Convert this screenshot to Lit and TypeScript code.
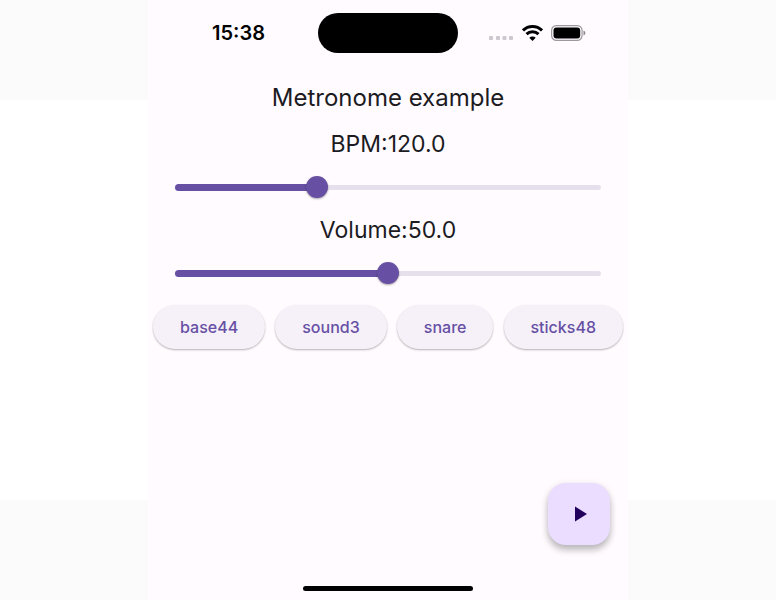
import { LitElement, html, css } from "lit";
import { customElement, property, state } from "lit/decorators.js";

/** Labelled slider with a thick active track and a thin inactive one. */
@customElement("value-slider")
class ValueSlider extends LitElement {
  @property() label = "";
  @property({ type: Number }) min = 0;
  @property({ type: Number }) max = 100;
  @property({ type: Number }) value = 0;

  static styles = css`
    :host {
      display: block;
    }
    .label {
      display: block;
      text-align: center;
      font-size: 23px;
      line-height: 30px;
      font-weight: 400;
    }
    .slider {
      display: grid;
      align-items: center;
      height: 56px;
      padding: 0 16px;
    }
    .slider > * {
      grid-area: 1 / 1;
    }
    .rail {
      margin: 0 11px;
      height: 5px;
      border-radius: 3px;
      background: #e6e0ec;
    }
    .active {
      margin: 0 11px;
    }
    .fill {
      height: 7px;
      border-radius: 4px;
      background: #6750a4;
    }
    input {
      appearance: none;
      width: 100%;
      height: 22px;
      margin: 0;
      background: transparent;
      cursor: pointer;
    }
    input::-webkit-slider-thumb {
      appearance: none;
      width: 22px;
      height: 22px;
      border-radius: 50%;
      background: #6750a4;
      box-shadow: 0 1px 2px rgba(0, 0, 0, 0.35);
    }
  `;

  private onInput(e: Event) {
    this.value = Number((e.target as HTMLInputElement).value);
  }

  render() {
    const share = ((this.value - this.min) / (this.max - this.min)) * 100;
    return html`
      <label class="label" for="range">${this.label}:${this.value.toFixed(1)}</label>
      <div class="slider">
        <div class="rail"></div>
        <div class="active"><div class="fill" style="width:${share}%"></div></div>
        <input id="range" type="range" min=${this.min} max=${this.max}
          .value=${String(this.value)} @input=${this.onInput} />
      </div>
    `;
  }
}

@customElement("status-bar")
class StatusBar extends LitElement {
  static styles = css`
    :host {
      display: grid;
      grid-template-columns: 1fr 140px 1fr;
      align-items: center;
      padding-top: 13px;
      color: #000;
    }
    .time {
      padding-left: 11px;
      text-align: center;
      font-size: 20px;
      line-height: 24px;
      font-weight: 600;
    }
    .island {
      height: 40px;
      border-radius: 20px;
      background: #000;
    }
    .icons {
      display: flex;
      align-items: center;
      justify-content: flex-end;
      gap: 8px;
      padding-right: 42px;
    }
    svg {
      display: block;
    }
  `;

  render() {
    return html`
      <div class="time">15:38</div>
      <div class="island"></div>
      <div class="icons">
        <svg width="25" height="16" viewBox="0 0 25 16" fill="#cdc8cf" aria-hidden="true">
          <rect x="0" y="11" width="4" height="4" rx="1" />
          <rect x="7" y="11" width="4" height="4" rx="1" />
          <rect x="13.500" y="11" width="4" height="4" rx="1" />
          <rect x="20" y="11" width="4" height="4" rx="1" />
        </svg>
        <svg width="21" height="16" viewBox="0 0 21 16" fill="none" stroke="#000" aria-hidden="true">
          <path d="M1 5.400a13.600 13.600 0 0 1 19 0" stroke-width="3" />
          <path d="M4.500 9.100a8.600 8.600 0 0 1 12 0" stroke-width="3" />
          <path d="M10.500 16 7.300 12.700a4.600 4.600 0 0 1 6.400 0z" fill="#000" stroke="none" />
        </svg>
        <svg width="35" height="16" viewBox="0 0 35 16" aria-hidden="true">
          <rect x="0.600" y="0.600" width="30.500" height="14.800" rx="4.800" fill="none" stroke="#9c999e" stroke-width="1.200" />
          <rect x="2.500" y="2.500" width="26.700" height="11" rx="3" fill="#000" />
          <path d="M32.500 5.600c2.500 1 2.500 4 0 5z" fill="#8c898e" />
        </svg>
      </div>
    `;
  }
}

@customElement("app-root")
class AppRoot extends LitElement {
  @state() private sounds = ["base44", "sound3", "snare", "sticks48"];

  static styles = css`
    :host {
      display: flex;
      justify-content: center;
      min-height: 100vh;
      background: linear-gradient(#fbfbfb 0 16.67%, #fff 16.67% 83.33%, #fbfbfb 83.33%);
      font-family: Inter, "Liberation Sans", sans-serif;
      color: #1c1b1f;
    }
    .screen {
      box-sizing: border-box;
      display: flex;
      flex-direction: column;
      width: 100%;
      max-width: 480px;
      background: #fffbff;
    }
    h1 {
      margin: 29px 0 15px;
      text-align: center;
      font-size: 24px;
      line-height: 32px;
      font-weight: 400;
    }
    .sounds {
      display: flex;
      flex-wrap: wrap;
      justify-content: space-between;
      gap: 8px;
      padding: 4px 5px;
    }
    button {
      border: none;
      font-family: inherit;
      cursor: pointer;
    }
    .sound {
      height: 44px;
      padding: 0 27px;
      border-radius: 22px;
      background: #f6f1f9;
      color: #6750a4;
      font-size: 16px;
      line-height: 20px;
      font-weight: 500;
      box-shadow: 0 1px 2px rgba(0, 0, 0, 0.3);
    }
    .bottom {
      display: flex;
      flex-direction: column;
      margin-top: auto;
    }
    .play {
      display: grid;
      place-items: center;
      align-self: flex-end;
      width: 62px;
      height: 62px;
      margin-right: 18px;
      padding: 0;
      border-radius: 18px;
      background: #eaddff;
      box-shadow: 0 5px 7px rgba(0, 0, 0, 0.24), 0 1px 8px rgba(0, 0, 0, 0.08);
    }
    .home {
      align-self: center;
      width: 170px;
      height: 5px;
      margin: 41px 0 9px;
      border-radius: 3px;
      background: #000;
    }
  `;

  render() {
    return html`
      <main class="screen">
        <status-bar></status-bar>
        <h1>Metronome example</h1>
        <value-slider label="BPM" min="30" max="300" value="120"></value-slider>
        <value-slider label="Volume" min="0" max="100" value="50"></value-slider>
        <div class="sounds">
          ${this.sounds.map((name) => html`<button class="sound">${name}</button>`)}
        </div>
        <div class="bottom">
          <button class="play" aria-label="Play">
            <svg width="26" height="26" viewBox="0 0 26 26" aria-hidden="true">
              <path d="M9 5.500v15l12-7.500z" fill="#21005d" />
            </svg>
          </button>
          <div class="home"></div>
        </div>
      </main>
    `;
  }
}
